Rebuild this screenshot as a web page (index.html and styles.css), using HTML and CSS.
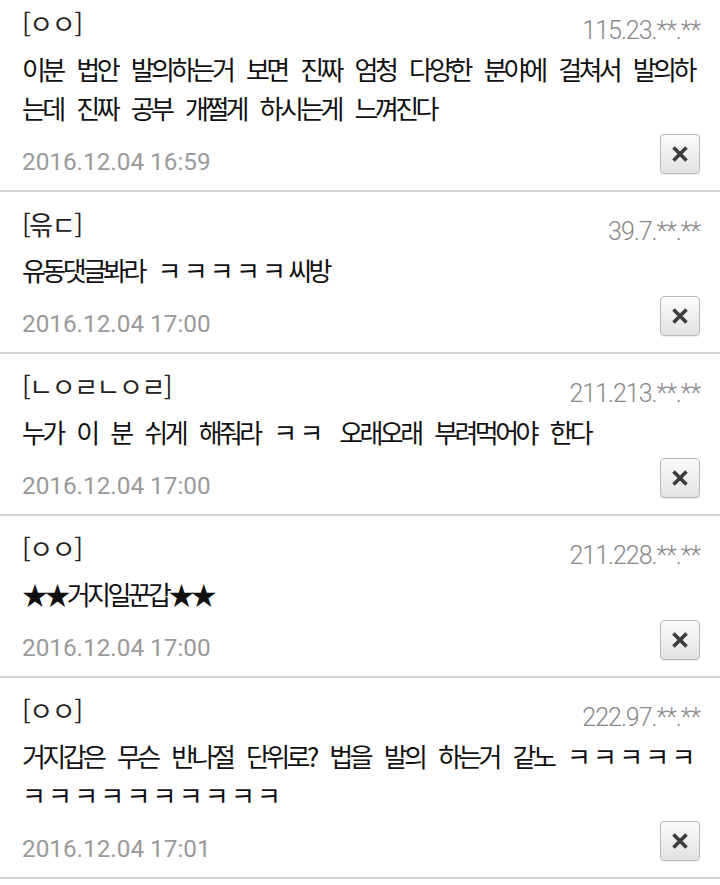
FILE: index.html
```html
<!DOCTYPE html>
<html lang="ko">
  <head>
    <meta charset="UTF-8" />
    <meta name="viewport" content="width=device-width, initial-scale=1.0" />
    <title>댓글</title>
    <link rel="stylesheet" href="styles.css">
  </head>
  <body>
    <ul class="comments">
      <li class="comment">
        <div class="commentHead">
          <span class="nick">[ㅇㅇ]</span>
          <span class="ip">115.23.**.**</span>
        </div>
        <p class="text">이분 법안 발의하는거 보면 진짜 엄청 다양한 분야에 걸쳐서 발의하는데 진짜 공부 개쩔게 하시는게 느껴진다</p>
        <div class="commentFoot">
          <span class="date">2016.12.04 16:59</span>
          <button class="delBtn" aria-label="삭제">
            <svg width="18" height="18" viewBox="0 0 18 18"><path d="M2.5 2.5 L15.5 15.5 M15.5 2.5 L2.5 15.5" /></svg>
          </button>
        </div>
      </li>
      <li class="comment">
        <div class="commentHead">
          <span class="nick">[윾ㄷ]</span>
          <span class="ip">39.7.**.**</span>
        </div>
        <p class="text">유동댓글봐라 <span class="jamo">ㅋㅋㅋㅋㅋ</span>씨방</p>
        <div class="commentFoot">
          <span class="date">2016.12.04 17:00</span>
          <button class="delBtn" aria-label="삭제">
            <svg width="18" height="18" viewBox="0 0 18 18"><path d="M2.5 2.5 L15.5 15.5 M15.5 2.5 L2.5 15.5" /></svg>
          </button>
        </div>
      </li>
      <li class="comment">
        <div class="commentHead">
          <span class="nick">[ㄴㅇㄹㄴㅇㄹ]</span>
          <span class="ip">211.213.**.**</span>
        </div>
        <p class="text">누가 이 분 쉬게 해줘라 <span class="jamo">ㅋㅋ</span> 오래오래 부려먹어야 한다</p>
        <div class="commentFoot">
          <span class="date">2016.12.04 17:00</span>
          <button class="delBtn" aria-label="삭제">
            <svg width="18" height="18" viewBox="0 0 18 18"><path d="M2.5 2.5 L15.5 15.5 M15.5 2.5 L2.5 15.5" /></svg>
          </button>
        </div>
      </li>
      <li class="comment">
        <div class="commentHead">
          <span class="nick">[ㅇㅇ]</span>
          <span class="ip">211.228.**.**</span>
        </div>
        <p class="text">★★거지일꾼갑★★</p>
        <div class="commentFoot">
          <span class="date">2016.12.04 17:00</span>
          <button class="delBtn" aria-label="삭제">
            <svg width="18" height="18" viewBox="0 0 18 18"><path d="M2.5 2.5 L15.5 15.5 M15.5 2.5 L2.5 15.5" /></svg>
          </button>
        </div>
      </li>
      <li class="comment">
        <div class="commentHead">
          <span class="nick">[ㅇㅇ]</span>
          <span class="ip">222.97.**.**</span>
        </div>
        <p class="text">거지갑은 무슨 반나절 단위로? 법을 발의 하는거 같노 <span class="jamo">ㅋㅋㅋㅋㅋㅋㅋㅋㅋㅋㅋㅋㅋㅋㅋ</span></p>
        <div class="commentFoot">
          <span class="date">2016.12.04 17:01</span>
          <button class="delBtn" aria-label="삭제">
            <svg width="18" height="18" viewBox="0 0 18 18"><path d="M2.5 2.5 L15.5 15.5 M15.5 2.5 L2.5 15.5" /></svg>
          </button>
        </div>
      </li>
    </ul>
  </body>
</html>
```

FILE: styles.css
```css
body {
  margin: 0;
  background-color: #ffffff;
  font-family: "Noto Sans CJK KR", "Noto Sans", sans-serif;
}

.comments {
  list-style-type: none;
  margin: -9px 0 0 0;
  padding: 0;
}

.comment {
  padding: 12px 20px 16px 22px;
  border-bottom: 2px solid #d3d3d3;
}

.commentHead {
  display: flex;
  justify-content: space-between;
  align-items: flex-start;
  height: 40px;
}

.nick {
  font-size: 26px;
  line-height: 40px;
  letter-spacing: -1.5px;
  color: #222222;
}

.ip {
  font-family: Roboto, "Liberation Sans", sans-serif;
  font-weight: 300;
  font-size: 25px;
  line-height: 40px;
  letter-spacing: -1px;
  padding-top: 8px;
  color: #888888;
}

.text {
  margin: 6px -3px 0 0;
  font-size: 26px;
  line-height: 39px;
  letter-spacing: -3.6px;
  word-spacing: 10px;
  color: #111111;
}

.jamo {
  letter-spacing: 2.2px;
}

.commentFoot {
  display: flex;
  justify-content: space-between;
  align-items: flex-end;
  margin-top: 7px;
  height: 40px;
}

.date {
  font-family: Roboto, "Liberation Sans", sans-serif;
  font-size: 24.3px;
  line-height: 24px;
  color: #9a9a9a;
}

.delBtn {
  display: flex;
  align-items: center;
  justify-content: center;
  width: 40px;
  height: 40px;
  padding: 0;
  border: 1px solid #b9b9b9;
  border-radius: 4px;
  background: linear-gradient(#fbfbfb, #e2e2e2);
  box-shadow: 0 1px 1px rgba(0, 0, 0, 0.08);
  cursor: pointer;
}

.delBtn path {
  stroke: #3c3c3c;
  stroke-width: 3.6;
  fill: none;
}
```
